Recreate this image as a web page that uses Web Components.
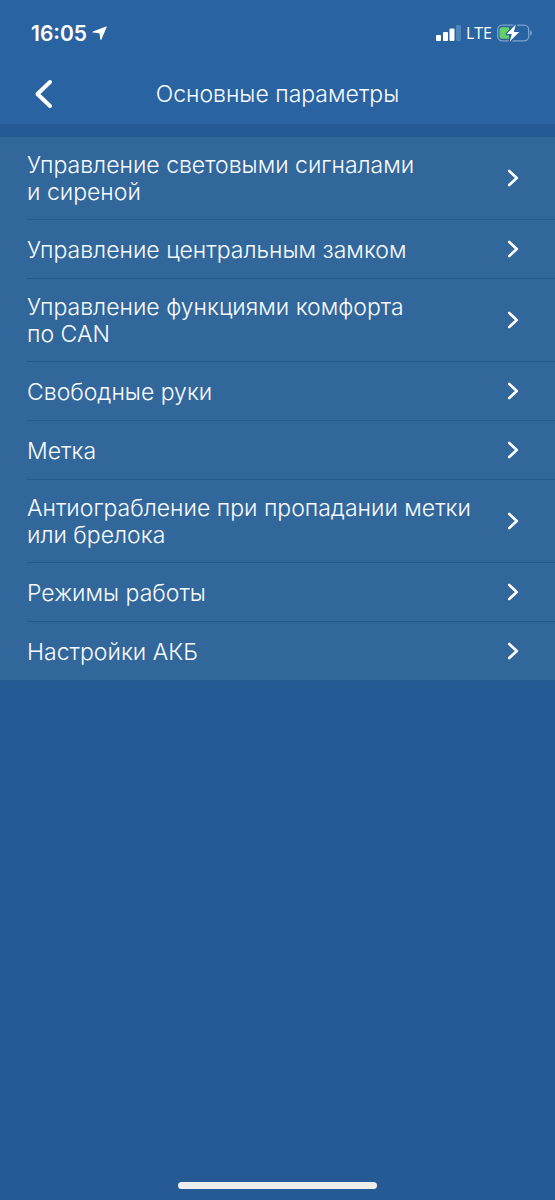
<!DOCTYPE html>
<html lang="ru">
<head>
    <meta charset="UTF-8">
    <meta name="viewport" content="width=device-width, initial-scale=1.0">
    <title>Основные параметры</title>
    <style>
        :root {
            --color--header: #2a63a1;
            --color--page: #255a94;
            --color--list: #32679c;
            --color--line: #27598b;
            --color--text: #f8fbfe;
        }

        body {
            margin: 0;
            background: var(--color--page);
            color: var(--color--text);
            font-family: Inter, "Liberation Sans", sans-serif;
        }
    </style>
</head>
<body>
    <settings-screen>
        <status-bar slot="top" time="16:05" network="LTE"></status-bar>
        <nav-bar slot="top">Основные параметры</nav-bar>
        <settings-list>
            <settings-item>Управление световыми сигналами<br>и сиреной</settings-item>
            <settings-item>Управление центральным замком</settings-item>
            <settings-item>Управление функциями комфорта<br>по CAN</settings-item>
            <settings-item>Свободные руки</settings-item>
            <settings-item>Метка</settings-item>
            <settings-item>Антиограбление при пропадании метки<br>или брелока</settings-item>
            <settings-item>Режимы работы</settings-item>
            <settings-item>Настройки АКБ</settings-item>
        </settings-list>
    </settings-screen>

    <script>
        class SettingsScreen extends HTMLElement {
            constructor() {
                super()
                this.attachShadow({mode: 'open'})
                this.shadowRoot.innerHTML = /*html */`
                    <style>
                        :host {
                            display: flex;
                            flex-direction: column;
                            min-height: 100vh;
                        }

                        header {
                            background: var(--color--header);
                        }

                        main {
                            flex: 1;
                            padding-top: 12px;
                        }

                        .home {
                            width: 36%;
                            height: 7px;
                            margin: 0 auto 11px;
                            border-radius: 4px;
                            background: #eeeeee;
                        }
                    </style>
                    <header><slot name="top"></slot></header>
                    <main><slot></slot></main>
                    <div class="home"></div>
                `
            }
        }

        class StatusBar extends HTMLElement {
            constructor() {
                super()
                this.attachShadow({mode: 'open'})
            }

            connectedCallback() {
                this.shadowRoot.innerHTML = /*html */`
                    <style>
                        :host {
                            display: flex;
                            justify-content: space-between;
                            align-items: center;
                            height: 64px;
                            padding: 2px 23px 0 31px;
                            box-sizing: border-box;
                            color: #fff;
                        }

                        div {
                            display: flex;
                            align-items: center;
                            gap: 5px;
                        }

                        svg {
                            display: block;
                        }

                        .time {
                            font-size: 21px;
                            font-weight: 600;
                        }

                        .network {
                            font-family: "Open Sans", sans-serif;
                            font-size: 16px;
                            font-weight: 500;
                        }
                    </style>
                    <div>
                        <span class="time">${this.getAttribute('time')}</span>
                        <svg width="15" height="15" viewBox="0 0 15 15" fill="#fff">
                            <path d="M14.2.4Q15 .2 14.7 1L9.4 13.4Q8.8 14.5 8.3 13.3L7.6 7.8Q7.5 7.3 7 7.2L1 6.6Q-.2 6.2.9 5.6Z"/>
                        </svg>
                    </div>
                    <div>
                        <svg width="25" height="16" viewBox="0 0 25 16" fill="#fff">
                            <rect x="0" y="10" width="5" height="6" rx="1"/>
                            <rect x="7" y="7" width="5" height="9" rx="1"/>
                            <rect x="13.5" y="3.5" width="5" height="12.5" rx="1"/>
                            <rect x="20" y="0" width="5" height="16" rx="1" fill="#4d84b9"/>
                        </svg>
                        <span class="network">${this.getAttribute('network')}</span>
                        <svg width="35" height="18" viewBox="0 0 35 18">
                            <rect x=".7" y="1.2" width="31" height="15.6" rx="4.5" fill="none" stroke="#7da4cc" stroke-width="1.3"/>
                            <path d="M33.2 6.2Q35 7 35 9t-1.8 2.8z" fill="#7da4cc"/>
                            <path d="M5 3.2h7v11.6H5a2.5 2.5 0 0 1-2.5-2.5V5.7A2.5 2.5 0 0 1 5 3.2z" fill="#65cf68"/>
                            <path d="M18.8.4 9.6 10h5.2L12.8 17.6 22.2 8h-5.4z" fill="#fff" stroke="#2a63a1" stroke-width="2.4" paint-order="stroke" stroke-linejoin="round"/>
                        </svg>
                    </div>
                `
            }
        }

        class NavBar extends HTMLElement {
            constructor() {
                super()
                this.attachShadow({mode: 'open'})
                this.shadowRoot.innerHTML = /*html */`
                    <style>
                        :host {
                            display: grid;
                            grid-template-columns: 60px 1fr 60px;
                            align-items: center;
                            height: 60px;
                        }

                        button {
                            padding: 0 0 0 34px;
                            border: 0;
                            background: none;
                            cursor: pointer;
                        }

                        svg {
                            display: block;
                        }

                        h1 {
                            margin: 0;
                            font-size: 23px;
                            font-weight: 350;
                            line-height: 27px;
                            text-align: center;
                        }
                    </style>
                    <button aria-label="Назад">
                        <svg width="20" height="30" viewBox="0 0 20 30" fill="none" stroke="#fff" stroke-width="4" stroke-linecap="round" stroke-linejoin="round">
                            <path d="M16 3 3.5 15 16 27"/>
                        </svg>
                    </button>
                    <h1><slot></slot></h1>
                `
            }
        }

        class SettingsList extends HTMLElement {
            constructor() {
                super()
                this.attachShadow({mode: 'open'})
                this.shadowRoot.innerHTML = /*html */`
                    <style>
                        :host {
                            display: block;
                            padding-left: 27px;
                            border: solid var(--color--line);
                            border-width: 1px 0;
                            background: var(--color--list);
                        }

                        ::slotted(:not(:last-child)) {
                            border-bottom: 1px solid var(--color--line);
                        }
                    </style>
                    <slot></slot>
                `
            }
        }

        class SettingsItem extends HTMLElement {
            constructor() {
                super()
                this.attachShadow({mode: 'open'})
                this.shadowRoot.innerHTML = /*html */`
                    <style>
                        :host {
                            display: block;
                        }

                        button {
                            display: flex;
                            justify-content: space-between;
                            align-items: center;
                            gap: 12px;
                            width: 100%;
                            min-height: 58px;
                            padding: 13px 36px 13px 0;
                            border: 0;
                            background: none;
                            color: inherit;
                            font: inherit;
                            font-size: 23px;
                            font-weight: 350;
                            line-height: 27px;
                            text-align: left;
                            cursor: pointer;
                        }

                        span {
                            padding-top: 2px;
                        }

                        svg {
                            flex: none;
                        }
                    </style>
                    <button>
                        <span><slot></slot></span>
                        <svg width="12" height="18" viewBox="0 0 12 18" fill="none" stroke="#fff" stroke-width="2.6" stroke-linecap="round" stroke-linejoin="round">
                            <path d="M2.2 2 9.8 9 2.2 16"/>
                        </svg>
                    </button>
                `
            }
        }

        customElements.define('settings-screen', SettingsScreen)
        customElements.define('status-bar', StatusBar)
        customElements.define('nav-bar', NavBar)
        customElements.define('settings-list', SettingsList)
        customElements.define('settings-item', SettingsItem)
    </script>
</body>
</html>
